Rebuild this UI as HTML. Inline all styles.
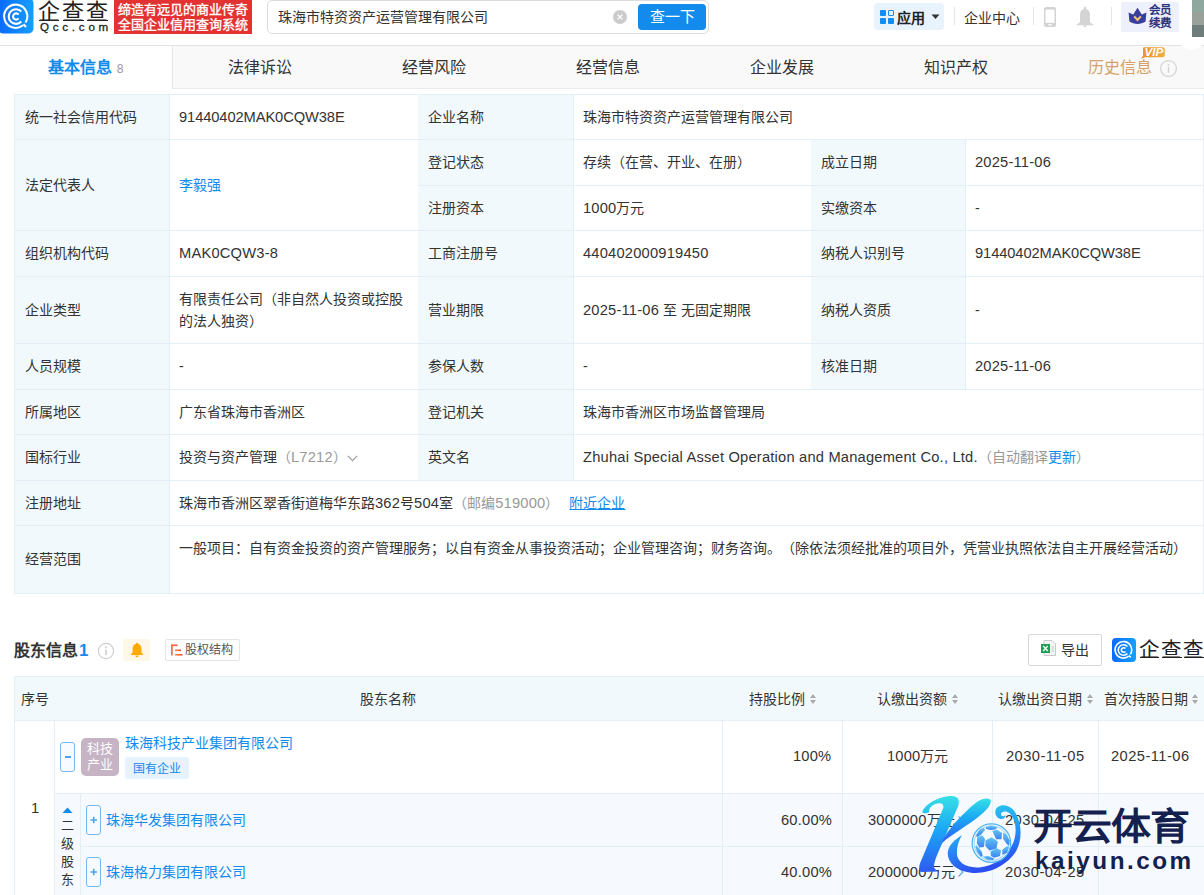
<!DOCTYPE html>
<html lang="zh-CN">
<head>
<meta charset="utf-8">
<style>
*{box-sizing:border-box;margin:0;padding:0}
html,body{width:1204px;height:895px;overflow:hidden;background:#fff}
body{position:relative;font-family:"Liberation Sans",sans-serif;font-size:14px;color:#333;text-spacing-trim:space-all}
.a{position:absolute;white-space:nowrap}
/* header */
#hdr{position:absolute;left:0;top:0;width:1204px;height:46px;background:#fff;border-bottom:1px solid #e3e3e3}
/* tabs */
#tabs{position:absolute;left:0;top:46px;width:1204px;height:43px;background:#f9f9f9;border-bottom:1px solid #ebebeb}
.tab{position:absolute;top:1px;height:42px;line-height:42px;font-size:16px;color:#333;text-align:center}
/* grid */
.c{position:absolute;border-right:1px solid #e4eef6;border-bottom:1px solid #e4eef6;border-top:1px solid #e4eef6;padding:0 10px 1px 10px;display:flex;align-items:center;line-height:22px}
.l{background:#f2f9fc}
i{font-style:normal;letter-spacing:.2px;font-size:14.7px}
.blue{color:#128bed}
.gray{color:#999}
</style>
</head>
<body>
<div id="hdr">
  <svg class="a" style="left:0;top:0" width="36" height="36" viewBox="0 0 36 36">
    <defs><linearGradient id="lg" x1="0" x2="1" y1="0" y2="0"><stop offset="0" stop-color="#0a69fb"/><stop offset="1" stop-color="#14a0ff"/></linearGradient></defs>
    <rect x="-2" y="-2" width="35.5" height="35.5" rx="5" fill="url(#lg)"/>
    <g fill="none" stroke="#fff" stroke-width="2.1" stroke-linecap="butt">
      <path d="M25.5 22.5 A11.6 11.6 0 1 0 23 25.3"/>
      <path d="M21.3 11.5 A7.3 7.3 0 1 0 21.3 21.6"/>
      <path d="M18.6 14.6 A3.1 3.1 0 1 0 18.6 18.4"/>
      <path d="M23.5 24.2 L26 27"/>
    </g>
  </svg>
  <div class="a" style="left:38px;top:1px;font-size:22px;line-height:22px;font-weight:300;color:#222;letter-spacing:2px">企查查</div>
  <div class="a" style="left:39px;top:19.5px;width:20px;height:1.5px;background:#222"></div>
  <div class="a" style="left:63px;top:19.5px;width:21px;height:1.5px;background:#222"></div>
  <div class="a" style="left:87px;top:19.5px;width:21px;height:1.5px;background:#222"></div>
  <div class="a" style="left:40px;top:21px;font-size:11.6px;line-height:12px;color:#222;letter-spacing:3.75px;font-weight:normal;-webkit-text-stroke:0.3px #222">Qcc.com</div>
  <div class="a" style="left:114px;top:0;width:138px;height:34px;background:#e33232"></div>
  <div class="a" style="left:118px;top:2px;font-size:13px;line-height:15px;color:#fff;font-weight:normal;-webkit-text-stroke:0.35px #fff;letter-spacing:0px">缔造有远见的商业传奇<br>全国企业信用查询系统</div>
  <div class="a" style="left:267px;top:0;width:442px;height:34px;border:1px solid #dcdcdc;border-radius:5px;background:#fff"></div>
  <div class="a" style="left:278px;top:7px;line-height:20px;font-size:14px;color:#333">珠海市特资资产运营管理有限公司</div>
  <div class="a" style="left:613px;top:10px;width:14px;height:14px;border-radius:50%;background:#ccc"></div>
  <svg class="a" style="left:613px;top:10px" width="14" height="14" viewBox="0 0 14 14"><path d="M4.6 4.6L9.4 9.4M9.4 4.6L4.6 9.4" stroke="#fff" stroke-width="1.3"/></svg>
  <div class="a" style="left:638px;top:4px;width:68px;height:26px;border-radius:4px;background:#128bed;color:#fff;font-size:15px;line-height:26px;text-align:center">查一下</div>

  <div class="a" style="left:874px;top:3px;width:70px;height:27px;border-radius:4px;background:#e9f3fe"></div>
  <div class="a" style="left:880px;top:10px;width:6px;height:6px;background:#128bed;border-radius:1px"></div>
  <div class="a" style="left:888px;top:10px;width:6px;height:6px;border:1.2px solid #128bed;border-radius:1px"></div>
  <div class="a" style="left:880px;top:18px;width:6px;height:6px;background:#128bed;border-radius:1px"></div>
  <div class="a" style="left:888px;top:18px;width:6px;height:6px;background:#128bed;border-radius:1px"></div>
  <div class="a" style="left:897px;top:8px;font-size:14px;line-height:20px;font-weight:bold;color:#222">应用</div>
  <svg class="a" style="left:931px;top:14px" width="9" height="6" viewBox="0 0 9 6"><path d="M0.5 0.5H8.5L4.5 5z" fill="#333"/></svg>
  <div class="a" style="left:954px;top:7px;width:1px;height:18px;background:#e5e5e5"></div>
  <div class="a" style="left:964px;top:8px;font-size:14px;line-height:20px;color:#333">企业中心</div>
  <div class="a" style="left:1033px;top:7px;width:1px;height:18px;background:#e5e5e5"></div>
  <svg class="a" style="left:1044px;top:7px" width="12" height="20" viewBox="0 0 12 20"><rect x="0" y="0" width="12" height="20" rx="2.2" fill="#d3d3d3"/><rect x="1.5" y="2.6" width="9" height="13.2" fill="#fff"/><rect x="4.2" y="17.2" width="3.6" height="1.3" fill="#fff"/></svg>
  <svg class="a" style="left:1076px;top:6px" width="18" height="22" viewBox="0 0 18 22"><path d="M9 0.8c0.7 0 1.1 0.5 1.1 1.3l0 0.9c2.6 0.7 3.9 3 3.9 5.9v7.4l3.3 2.3v0.6H0.7v-0.6L4 16.3V8.9c0-2.9 1.3-5.2 3.9-5.9l0-0.9c0-0.8 0.4-1.3 1.1-1.3z" fill="#d4d4d4"/><path d="M7 19.6h4c-0.2 0.9-0.9 1.5-2 1.5s-1.8-0.6-2-1.5z" fill="#d4d4d4"/></svg>
  <div class="a" style="left:1111px;top:7px;width:1px;height:18px;background:#e5e5e5"></div>
  <div class="a" style="left:1121px;top:2px;width:58px;height:30px;background:#eef0fb;border-radius:2px"></div>
  <svg class="a" style="left:1128px;top:7px" width="19" height="17" viewBox="0 0 19 17"><path d="M0.6 5.5L5.2 7.6 9.5 0.8 13.8 7.6 18.4 5.5 17.6 14.6C15.2 16.2 12.4 16.9 9.5 16.9S3.8 16.2 1.4 14.6z" fill="#3b3f9c"/><path d="M6.2 9.4L9.5 13 12.8 9.4" fill="none" stroke="#f8c873" stroke-width="1.9"/></svg>
  <div class="a" style="left:1149px;top:4px;font-size:11.5px;line-height:13px;font-weight:bold;color:#2b3480">会员<br>续费</div>
  
  
</div>
<div id="tabs">
  <div class="a" style="left:0;top:0;width:173px;height:43px;background:#fff;border-right:1px solid #e6e6e6"></div>
  <div class="tab" style="left:0;width:172px;color:#128bed;font-weight:bold">基本信息 <span style="color:#999;font-weight:normal;font-size:12.1px">8</span></div>
  <div class="tab" style="left:173px;width:174px">法律诉讼</div>
  <div class="tab" style="left:347px;width:174px">经营风险</div>
  <div class="tab" style="left:521px;width:174px">经营信息</div>
  <div class="tab" style="left:695px;width:174px">企业发展</div>
  <div class="tab" style="left:869px;width:174px">知识产权</div>
  <div class="tab" style="left:1043px;width:154px;color:#d6a068">历史信息</div>
  <svg class="a" style="left:1159px;top:13px" width="19" height="19" viewBox="0 0 19 19"><circle cx="9.5" cy="9.5" r="7.9" fill="none" stroke="#d5d5d5" stroke-width="1.3"/><rect x="8.8" y="8" width="1.4" height="5.8" fill="#d0d0d0"/><circle cx="9.5" cy="5.8" r="0.9" fill="#d0d0d0"/></svg>
  <svg class="a" style="left:1140px;top:0px" width="26" height="13" viewBox="0 0 26 13"><defs><linearGradient id="vg" x1="0" x2="1"><stop offset="0" stop-color="#e9922a"/><stop offset="1" stop-color="#f2ac45"/></linearGradient></defs><path d="M4 1.2H22.5C24 1.2 24.8 2 24.8 3.4V9C24.8 10.4 24 11.2 22.5 11.2H5.5L1 12.8 3 9.5V3.4C3 2 3.2 1.2 4 1.2Z" fill="url(#vg)"/><text x="13.8" y="10" font-family="Liberation Sans" font-weight="bold" font-style="italic" font-size="11.6" fill="#fff" text-anchor="middle">VIP</text></svg>
  <div class="a" style="left:1179px;top:-46px;width:25px;height:50px;background:#fff;border-radius:0 0 12px 12px"></div>
  <div class="a" style="left:1192px;top:-46px;width:12px;height:12px;background:#8fa89f"></div>
  <div class="a" style="left:1192px;top:-34px;width:12px;height:13px;background:#9aa19b"></div>
  <div class="a" style="left:1192px;top:-21px;width:12px;height:12px;background:#6f7e7b"></div>
</div>

<!-- basic info grid -->
<div class="a" style="left:14px;top:94px;width:1190px;height:500px;border-top:1px solid #e4eef6;border-left:1px solid #e4eef6"></div>
<div id="grid">
<div class="c l" style="left:14px;top:94px;width:156px;height:46px;border-left:1px solid #e4eef6;border-top:1px solid #e4eef6"><span>统一社会信用代码</span></div>
<div class="c" style="left:169px;top:94px;width:250px;height:46px;border-top:1px solid #e4eef6"><span><i style="letter-spacing:-.1px">91440402MAK0CQW38E</i></span></div>
<div class="c l" style="left:418px;top:94px;width:156px;height:46px;border-top:1px solid #e4eef6"><span>企业名称</span></div>
<div class="c" style="left:573px;top:94px;width:631px;height:46px;border-top:1px solid #e4eef6"><span>珠海市特资资产运营管理有限公司</span></div>

<div class="c l" style="left:14px;top:139px;width:156px;height:92px;border-left:1px solid #e4eef6"><span>法定代表人</span></div>
<div class="c blue" style="left:169px;top:139px;width:250px;height:92px"><span>李毅强</span></div>
<div class="c l" style="left:418px;top:139px;width:156px;height:47px"><span>登记状态</span></div>
<div class="c" style="left:573px;top:139px;width:239px;height:47px"><span>存续（在营、开业、在册）</span></div>
<div class="c l" style="left:811px;top:139px;width:155px;height:47px"><span>成立日期</span></div>
<div class="c" style="left:965px;top:139px;width:239px;height:47px"><span><i>2025-11-06</i></span></div>
<div class="c l" style="left:418px;top:185px;width:156px;height:46px"><span>注册资本</span></div>
<div class="c" style="left:573px;top:185px;width:239px;height:46px"><span><i>1000</i>万元</span></div>
<div class="c l" style="left:811px;top:185px;width:155px;height:46px"><span>实缴资本</span></div>
<div class="c" style="left:965px;top:185px;width:239px;height:46px"><span>-</span></div>

<div class="c l" style="left:14px;top:230px;width:156px;height:47px;border-left:1px solid #e4eef6"><span>组织机构代码</span></div>
<div class="c" style="left:169px;top:230px;width:250px;height:47px"><span><i>MAK0CQW3-8</i></span></div>
<div class="c l" style="left:418px;top:230px;width:156px;height:47px"><span>工商注册号</span></div>
<div class="c" style="left:573px;top:230px;width:239px;height:47px"><span><i>440402000919450</i></span></div>
<div class="c l" style="left:811px;top:230px;width:155px;height:47px"><span>纳税人识别号</span></div>
<div class="c" style="left:965px;top:230px;width:239px;height:47px"><span><i style="letter-spacing:-.1px">91440402MAK0CQW38E</i></span></div>

<div class="c l" style="left:14px;top:276px;width:156px;height:68px;border-left:1px solid #e4eef6"><span>企业类型</span></div>
<div class="c" style="left:169px;top:276px;width:250px;height:68px;white-space:normal"><span>有限责任公司（非自然人投资或控股的法人独资）</span></div>
<div class="c l" style="left:418px;top:276px;width:156px;height:68px"><span>营业期限</span></div>
<div class="c" style="left:573px;top:276px;width:239px;height:68px"><span><i>2025-11-06</i> 至 无固定期限</span></div>
<div class="c l" style="left:811px;top:276px;width:155px;height:68px"><span>纳税人资质</span></div>
<div class="c" style="left:965px;top:276px;width:239px;height:68px"><span>-</span></div>

<div class="c l" style="left:14px;top:343px;width:156px;height:47px;border-left:1px solid #e4eef6"><span>人员规模</span></div>
<div class="c" style="left:169px;top:343px;width:250px;height:47px"><span>-</span></div>
<div class="c l" style="left:418px;top:343px;width:156px;height:47px"><span>参保人数</span></div>
<div class="c" style="left:573px;top:343px;width:239px;height:47px"><span>-</span></div>
<div class="c l" style="left:811px;top:343px;width:155px;height:47px"><span>核准日期</span></div>
<div class="c" style="left:965px;top:343px;width:239px;height:47px"><span><i>2025-11-06</i></span></div>

<div class="c l" style="left:14px;top:389px;width:156px;height:46px;border-left:1px solid #e4eef6"><span>所属地区</span></div>
<div class="c" style="left:169px;top:389px;width:250px;height:46px"><span>广东省珠海市香洲区</span></div>
<div class="c l" style="left:418px;top:389px;width:156px;height:46px"><span>登记机关</span></div>
<div class="c" style="left:573px;top:389px;width:631px;height:46px"><span>珠海市香洲区市场监督管理局</span></div>

<div class="c l" style="left:14px;top:434px;width:156px;height:47px;border-left:1px solid #e4eef6"><span>国标行业</span></div>
<div class="c" style="left:169px;top:434px;width:250px;height:47px"><span>投资与资产管理<span class="gray">（<i>L7212</i>）</span><svg style="margin-left:0px;vertical-align:0px" width="11" height="7" viewBox="0 0 11 7"><path d="M0.8 0.8L5.5 5.6 10.2 0.8" fill="none" stroke="#999" stroke-width="1.1"/></svg></span></div>
<div class="c l" style="left:418px;top:434px;width:156px;height:47px"><span>英文名</span></div>
<div class="c" style="left:573px;top:434px;width:631px;height:47px"><span><i>Zhuhai Special Asset Operation and Management Co., Ltd.</i><span class="gray">（自动翻译<span class="blue">更新</span>）</span></span></div>

<div class="c l" style="left:14px;top:480px;width:156px;height:46px;border-left:1px solid #e4eef6"><span>注册地址</span></div>
<div class="c" style="left:169px;top:480px;width:1035px;height:46px"><span>珠海市香洲区翠香街道梅华东路<i>362</i>号<i>504</i>室<span class="gray">（邮编<i>519000</i>）</span><span class="blue" style="margin-left:10px;text-decoration:underline;text-underline-offset:1px">附近企业</span></span></div>

<div class="c l" style="left:14px;top:525px;width:156px;height:69px;border-left:1px solid #e4eef6"><span>经营范围</span></div>
<div class="c" style="left:169px;top:525px;width:1035px;height:69px;align-items:flex-start;padding-top:11px"><span>一般项目：自有资金投资的资产管理服务；以自有资金从事投资活动；企业管理咨询；财务咨询。（除依法须经批准的项目外，凭营业执照依法自主开展经营活动）</span></div>
</div>

<!-- shareholder section -->
<div class="a" style="left:14px;top:640px;font-size:16px;line-height:22px;font-weight:bold;color:#333">股东信息</div>
<div class="a" style="left:79px;top:640px;font-size:16.9px;line-height:22px;font-weight:bold;color:#128bed">1</div>
<svg class="a" style="left:97px;top:642px" width="18" height="18" viewBox="0 0 18 18"><circle cx="9" cy="9" r="7.6" fill="none" stroke="#cfcfcf" stroke-width="1.2"/><rect x="8.3" y="7.6" width="1.4" height="5.6" fill="#c8c8c8"/><circle cx="9" cy="5.5" r="0.9" fill="#c8c8c8"/></svg>
<div class="a" style="left:123px;top:639px;width:27px;height:22px;background:#fff7e8;border-radius:2px"></div>
<svg class="a" style="left:130px;top:642px" width="14" height="16" viewBox="0 0 14 16"><path d="M7 0.8c0.6 0 1 0.4 1 0.9 2.3 0.5 3.4 2.5 3.4 4.8v3.8l1.6 2v0.8H1v-0.8l1.6-2V6.5c0-2.3 1.1-4.3 3.4-4.8 0-0.5 0.4-0.9 1-0.9z" fill="#ffaa00"/><path d="M5.4 13.6h3.2c0 1-0.7 1.6-1.6 1.6s-1.6-0.6-1.6-1.6z" fill="#ffaa00"/></svg>
<div class="a" style="left:165px;top:639px;width:75px;height:22px;border:1px solid #e5e5e5;border-radius:2px;background:#fff"></div>
<svg class="a" style="left:170px;top:643px" width="14" height="14" viewBox="0 0 14 14"><defs><linearGradient id="eg" x1="0" x2="1"><stop offset="0" stop-color="#ff8a3d"/><stop offset="1" stop-color="#f4452f"/></linearGradient></defs><rect x="1" y="1.5" width="6.5" height="1.6" fill="url(#eg)"/><rect x="1" y="1.5" width="1.6" height="11" fill="url(#eg)"/><rect x="5" y="6.5" width="6" height="1.6" fill="url(#eg)"/><rect x="5" y="11" width="7.5" height="1.6" fill="url(#eg)"/></svg>
<div class="a" style="left:185px;top:641px;font-size:12px;line-height:18px;color:#555">股权结构</div>

<div class="a" style="left:1028px;top:634px;width:74px;height:32px;border:1px solid #d8d8d8;border-radius:2px;background:#fff"></div>
<svg class="a" style="left:1040px;top:639px" width="17" height="18" viewBox="0 0 17 18"><path d="M4 1.5h8l3.5 3.5v11.5H4z" fill="#f4f4f4" stroke="#c9c9c9" stroke-width="1"/><rect x="1" y="5" width="9" height="9" fill="#1f9d55"/><path d="M3.2 7l4.6 5M7.8 7l-4.6 5" stroke="#fff" stroke-width="1.3"/><path d="M11.5 8h2.5M11.5 10h2.5M11.5 12h2.5" stroke="#bbb" stroke-width="0.8"/></svg>
<div class="a" style="left:1061px;top:641px;font-size:14px;line-height:18px;color:#333">导出</div>
<svg class="a" style="left:1112px;top:638px" width="24" height="24" viewBox="0 0 36 36">
  <rect x="0" y="0" width="36" height="36" rx="6" fill="url(#lg)"/>
  <g fill="none" stroke="#fff" stroke-width="2.4">
    <path d="M27.5 24.5 A12.4 12.4 0 1 0 25 27.3"/>
    <path d="M23.1 12.7 A7.9 7.9 0 1 0 23.1 23.3"/>
    <path d="M20.1 15.9 A3.4 3.4 0 1 0 20.1 20.1"/>
    <path d="M25.5 26.2 L28.2 29.2"/>
  </g>
</svg>
<div class="a" style="left:1139px;top:638.5px;font-size:20.5px;line-height:22px;font-weight:300;color:#222;letter-spacing:1.8px">企查查</div>
<div class="a" style="left:1140px;top:656.5px;width:19px;height:1.5px;background:#222"></div>
<div class="a" style="left:1162px;top:656.5px;width:20px;height:1.5px;background:#222"></div>
<div class="a" style="left:1184px;top:656.5px;width:20px;height:1.5px;background:#222"></div>

<!-- shareholder table -->
<div class="a" style="left:14px;top:676px;width:1190px;height:45px;background:#f2f9fc;border:1px solid #e4eef6;border-right:none"></div>
<div class="a" style="left:21px;top:688px;line-height:22px">序号</div>
<div class="a" style="left:360px;top:688px;line-height:22px">股东名称</div>
<div class="a" style="left:749px;top:688px;line-height:22px">持股比例</div>
<div class="a" style="left:877px;top:688px;line-height:22px">认缴出资额</div>
<div class="a" style="left:998px;top:688px;line-height:22px">认缴出资日期</div>
<div class="a" style="left:1104px;top:688px;line-height:22px">首次持股日期</div>
<svg class="a" style="left:809px;top:693px" width="8" height="12" viewBox="0 0 8 12"><path d="M4 1L7 5H1zM4 11L7 7H1z" fill="#aaa"/></svg>
<svg class="a" style="left:951px;top:693px" width="8" height="12" viewBox="0 0 8 12"><path d="M4 1L7 5H1zM4 11L7 7H1z" fill="#aaa"/></svg>
<svg class="a" style="left:1086px;top:693px" width="8" height="12" viewBox="0 0 8 12"><path d="M4 1L7 5H1zM4 11L7 7H1z" fill="#aaa"/></svg>
<svg class="a" style="left:1191px;top:693px" width="8" height="12" viewBox="0 0 8 12"><path d="M4 1L7 5H1zM4 11L7 7H1z" fill="#aaa"/></svg>

<div class="a" style="left:14px;top:720px;width:1190px;height:175px;border-left:1px solid #e4eef6"></div>
<div class="a" style="left:54px;top:720px;width:1px;height:175px;background:#e4eef6"></div>
<div class="a" style="left:31px;top:797px;line-height:22px"><i>1</i></div>
<div class="a" style="left:722px;top:720px;width:1px;height:175px;background:#e4eef6"></div>
<div class="a" style="left:842px;top:720px;width:1px;height:175px;background:#e4eef6"></div>
<div class="a" style="left:992px;top:720px;width:1px;height:175px;background:#e4eef6"></div>
<div class="a" style="left:1098px;top:720px;width:1px;height:175px;background:#e4eef6"></div>
<!-- row1 -->
<div class="a" style="left:60px;top:742px;width:15px;height:30px;border:1px solid #76b7f3;border-radius:3px;background:#f7fbff"></div>
<div class="a" style="left:64.5px;top:755.5px;width:6.5px;height:2.5px;background:#4ea3ef"></div>
<div class="a" style="left:81px;top:738px;width:38px;height:38px;border-radius:5px;background:#c6b4c4;color:#fff;font-size:13px;line-height:16px;text-align:center;padding-top:3px;white-space:normal">科技<br>产业</div>
<div class="a blue" style="left:125px;top:732px;line-height:22px">珠海科技产业集团有限公司</div>
<div class="a" style="left:125px;top:757px;width:64px;height:22px;background:#e6f2fc;border-radius:2px;color:#128bed;font-size:12px;line-height:24px;text-align:center">国有企业</div>
<div class="a" style="left:793px;top:745px;line-height:22px"><i>100%</i></div>
<div class="a" style="left:887px;top:745px;line-height:22px"><i>1000</i>万元</div>
<div class="a" style="left:1006px;top:745px;line-height:22px"><i style="letter-spacing:.45px">2030-11-05</i></div>
<div class="a" style="left:1111px;top:745px;line-height:22px"><i style="letter-spacing:.45px">2025-11-06</i></div>
<!-- sub rows -->
<div class="a" style="left:55px;top:793px;width:1149px;height:102px;background:#f6fafe;border-top:1px solid #e4eef6"></div>
<div class="a" style="left:80px;top:793px;width:1px;height:102px;background:#e4eef6"></div>
<div class="a" style="left:81px;top:846px;width:1123px;height:1px;background:#e4eef6"></div>
<div class="a" style="left:722px;top:793px;width:1px;height:102px;background:#e4eef6"></div>
<div class="a" style="left:842px;top:793px;width:1px;height:102px;background:#e4eef6"></div>
<div class="a" style="left:992px;top:793px;width:1px;height:102px;background:#e4eef6"></div>
<div class="a" style="left:1098px;top:793px;width:1px;height:102px;background:#e4eef6"></div>
<svg class="a" style="left:62px;top:807px" width="11" height="7" viewBox="0 0 11 7"><path d="M5.5 0.5L10.5 6H0.5z" fill="#128bed"/></svg>
<div class="a" style="left:60px;top:816.5px;width:15px;font-size:13px;line-height:18px;white-space:normal;text-align:center">二<br>级<br>股<br>东</div>
<div class="a" style="left:86px;top:805px;width:15px;height:30px;border:1px solid #76b7f3;border-radius:3px;background:#f7fbff"></div>
<svg class="a" style="left:86px;top:805px" width="15" height="30" viewBox="0 0 15 30"><path d="M4.5 15h6.5M7.75 11.75v6.5" stroke="#4ea3ef" stroke-width="1.6"/></svg>
<div class="a blue" style="left:106px;top:809px;line-height:22px">珠海华发集团有限公司</div>
<div class="a" style="left:781px;top:809px;line-height:22px"><i>60.00%</i></div>
<div class="a" style="left:868px;top:809px;line-height:22px"><i>3000000</i>万元</div>
<div class="a" style="left:1005px;top:809px;line-height:22px"><i style="letter-spacing:.45px">2030-04-25</i></div>
<div class="a" style="left:86px;top:857px;width:15px;height:30px;border:1px solid #76b7f3;border-radius:3px;background:#f7fbff"></div>
<svg class="a" style="left:86px;top:857px" width="15" height="30" viewBox="0 0 15 30"><path d="M4.5 15h6.5M7.75 11.75v6.5" stroke="#4ea3ef" stroke-width="1.6"/></svg>
<div class="a blue" style="left:106px;top:861px;line-height:22px">珠海格力集团有限公司</div>
<div class="a" style="left:781px;top:861px;line-height:22px"><i>40.00%</i></div>
<div class="a" style="left:868px;top:861px;line-height:22px"><i>2000000</i>万元</div>
<div class="a" style="left:1005px;top:861px;line-height:22px"><i style="letter-spacing:.45px">2030-04-25</i></div>

<svg class="a" style="left:957px;top:815px" width="8" height="12" viewBox="0 0 8 12"><path d="M1.5 1.5L6 6 1.5 10.5" fill="none" stroke="#5aa9f0" stroke-width="1.2"/></svg>
<svg class="a" style="left:957px;top:866px" width="8" height="12" viewBox="0 0 8 12"><path d="M1.5 1.5L6 6 1.5 10.5" fill="none" stroke="#5aa9f0" stroke-width="1.2"/></svg>
<!-- overlay logo -->
<svg class="a" style="left:910px;top:790px" width="120" height="105" viewBox="0 0 1023 895">
  <defs>
    <linearGradient id="kg" x1="0" y1="0" x2="0" y2="1"><stop offset="0" stop-color="#36e0e6"/><stop offset="0.45" stop-color="#1aa6f5"/><stop offset="1" stop-color="#2f5af2"/></linearGradient>
    <linearGradient id="kg2" x1="0" y1="0" x2="0.3" y2="1"><stop offset="0" stop-color="#2ad6ea"/><stop offset="0.5" stop-color="#24a0f5"/><stop offset="1" stop-color="#2c4ff0"/></linearGradient>
    <linearGradient id="bg" x1="0" y1="0" x2="0" y2="1"><stop offset="0" stop-color="#6cc7f5"/><stop offset="1" stop-color="#2f7fe8"/></linearGradient>
  </defs>
  <path d="M105 190 C120 130 230 60 340 52 C410 48 425 85 412 135 L300 395 C260 490 215 580 205 640 C200 670 225 690 250 695 L95 700 C70 690 75 640 100 590 L285 150 C290 115 255 105 215 120 C180 135 160 160 165 185 C150 200 115 205 105 190 Z" fill="url(#kg)"/>
  <path d="M690 95 C680 160 600 220 470 310 C390 365 320 410 268 455 C300 380 360 300 430 230 C500 160 560 100 610 80 C650 65 690 70 690 95 Z" fill="url(#kg)"/>
  <path d="M445 385 C380 420 330 470 322 530 C315 610 390 690 520 705 C680 720 830 640 905 520 C960 420 955 280 890 180 C850 130 790 115 748 145 C715 170 720 230 765 245 C790 255 815 240 815 215 C800 230 775 225 775 205 C780 180 820 175 850 200 C905 250 915 360 880 450 C830 570 720 650 590 660 C470 668 400 610 400 540 C400 470 420 420 445 385 Z" fill="url(#kg2)"/>
</svg>
<svg class="a" style="left:966px;top:818px" width="50" height="50" viewBox="0 0 895 895">
  <defs><linearGradient id="bg2" x1="0" y1="0" x2="0" y2="1"><stop offset="0" stop-color="#62c6f6"/><stop offset="1" stop-color="#3a82f0"/></linearGradient></defs>
  <circle cx="455" cy="450" r="345" fill="#f5faff" stroke="#4fb4f4" stroke-width="22"/>
  <circle cx="455" cy="450" r="310" fill="none" stroke="#7cc8f6" stroke-width="14"/>
  <g fill="url(#bg2)">
    <path d="M460 345L570 420 545 545 420 580 345 500 350 400Z"/>
    <path d="M470 230L560 210 645 270 635 380 540 380Z"/>
    <path d="M200 345L290 310 340 375 320 520 240 530 195 450Z"/>
    <path d="M440 600L545 535 625 580 610 680 510 710 445 680Z"/>
    <path d="M355 165L450 140 545 160 550 195 450 215 360 195Z"/>
    <path d="M180 320L240 210 320 175 340 215 270 300 200 340Z"/>
    <path d="M665 260L720 290 780 400 775 490 735 475 665 370Z"/>
    <path d="M650 570L735 500 770 520 740 620 650 660Z"/>
    <path d="M165 510L190 490 280 600 300 685 265 690 200 610Z"/>
    <path d="M300 690L400 680 500 720 490 750 380 745Z"/>
  </g>
</svg>
<div class="a" style="left:1033px;top:800px;font-size:40px;line-height:52px;font-weight:bold;color:#14214f;letter-spacing:-1px;transform:scaleY(0.93);transform-origin:0 80%">开云体育</div>
<div class="a" style="left:1035px;top:847px;font-size:24.3px;line-height:27px;font-weight:bold;color:#14214f;letter-spacing:2.5px">kaiyun.com</div>
</body>
</html>
